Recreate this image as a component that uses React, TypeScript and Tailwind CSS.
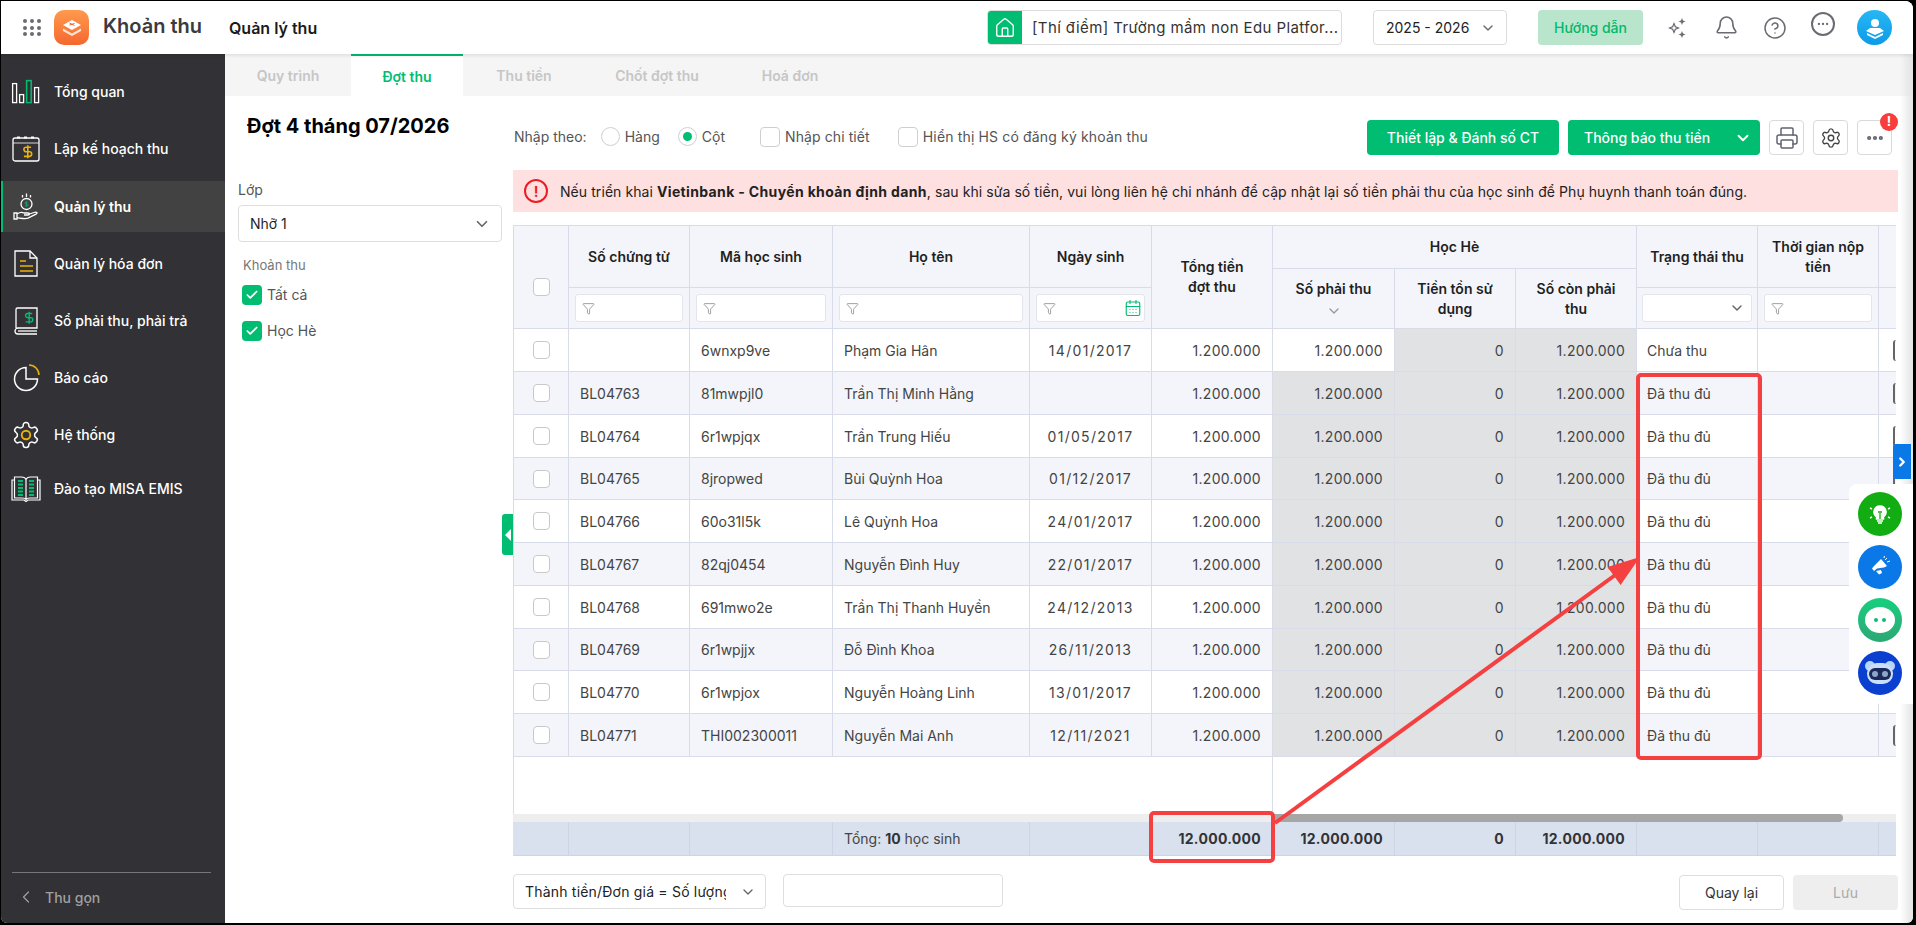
import { Bell, CalendarDays, Check, ChevronDown, ChevronLeft, ChevronRight, CircleHelp, Ellipsis, Filter, House, Printer, Settings } from "lucide-react";
import type { ReactNode } from "react";

const DOLLAR = "M12 2v20 M17 5H9.5a3.5 3.5 0 0 0 0 7h5a3.5 3.5 0 0 1 0 7H6";
const GEAR =
  "M12.22 2h-.44a2 2 0 0 0-2 2v.18a2 2 0 0 1-1 1.73l-.43.25a2 2 0 0 1-2 0l-.15-.08a2 2 0 0 0-2.73.73l-.22.38a2 2 0 0 0 .73 2.73l.15.1a2 2 0 0 1 1 1.72v.51a2 2 0 0 1-1 1.74l-.15.09a2 2 0 0 0-.73 2.73l.22.38a2 2 0 0 0 2.73.73l.15-.08a2 2 0 0 1 2 0l.43.25a2 2 0 0 1 1 1.73V20a2 2 0 0 0 2 2h.44a2 2 0 0 0 2-2v-.18a2 2 0 0 1 1-1.73l.43-.25a2 2 0 0 1 2 0l.15.08a2 2 0 0 0 2.73-.73l.22-.39a2 2 0 0 0-.73-2.73l-.15-.08a2 2 0 0 1-1-1.74v-.5a2 2 0 0 1 1-1.74l.15-.09a2 2 0 0 0 .73-2.73l-.22-.38a2 2 0 0 0-2.73-.73l-.15.08a2 2 0 0 1-2 0l-.43-.25a2 2 0 0 1-1-1.73V4a2 2 0 0 0-2-2z";

const NavSvg = ({ children }: { children: ReactNode }) => (
  <svg width="30" height="30" viewBox="0 0 30 30" fill="none" stroke="#fff" strokeWidth="1.3">
    {children}
  </svg>
);

const Dollar = ({ x, y, s, color }: { x: number; y: number; s: number; color: string }) => (
  <g transform={`translate(${x} ${y}) scale(${s})`}>
    <path d={DOLLAR} stroke={color} strokeWidth={2.4} fill="none" />
  </g>
);

const navItems: { label: string; icon: ReactNode; active?: boolean; cls: string }[] = [
  {
    label: "Tổng quan",
    cls: "mt-[12px]",
    icon: (
      <NavSvg>
        <rect x="1.6" y="6.6" width="4" height="19" />
        <rect x="8.6" y="17.6" width="4" height="8" />
        <rect x="15.6" y="3.6" width="4.6" height="22" stroke="#00bd71" strokeWidth="1.5" />
        <rect x="23.6" y="10.6" width="4" height="15" />
      </NavSvg>
    ),
  },
  {
    label: "Lập kế hoạch thu",
    cls: "mt-[6px]",
    icon: (
      <NavSvg>
        <rect x="2" y="4" width="26" height="23" rx="2" />
        <path d="M2 9h26" strokeWidth="0.8" />
        <path d="M6 3.5h3M13 3.5h3M20 3.5h3" strokeWidth="2" />
        <Dollar x={9} y={10} s={0.65} color="#eab308" />
      </NavSvg>
    ),
  },
  {
    label: "Quản lý thu",
    active: true,
    cls: "mt-[7px]",
    icon: (
      <NavSvg>
        <circle cx="15.5" cy="12" r="5.5" />
        <path d="M15.5 1.5v3.5M11.5 3v2.5M19.5 3v2.5" />
        <Dollar x={12.3} y={8.8} s={0.27} color="#00bd71" />
        <path d="M3 21h3v6H3zM6 22c3-2 5-2 7-1h4c2 0 2 2 0 2h-4M17 22.5l6-2c3-1 4 .5 2 1.7l-8 4c-3 1-7 0-11-.5" />
      </NavSvg>
    ),
  },
  {
    label: "Quản lý hóa đơn",
    cls: "mt-[6px]",
    icon: (
      <NavSvg>
        <path d="M4 2h15l7 7v18H4z" />
        <path d="M19 2v7h7" />
        <path d="M9 12h6M9 17h13M9 22h13" stroke="#eab308" strokeWidth="1.5" />
      </NavSvg>
    ),
  },
  {
    label: "Sổ phải thu, phải trả",
    cls: "mt-[6px]",
    icon: (
      <NavSvg>
        <path d="M5 22V3.5A1.5 1.5 0 0 1 6.5 2H26v20H7a2.5 2.5 0 0 0 0 6h19" />
        <path d="M7 25h19" />
        <Dollar x={11} y={4.5} s={0.6} color="#00bd71" />
      </NavSvg>
    ),
  },
  {
    label: "Báo cáo",
    cls: "mt-[6px]",
    icon: (
      <NavSvg>
        <path d="M15 4.5a11.5 11.5 0 1 0 11.5 11.5H15z" strokeWidth="1.5" />
        <path d="M18 2a10 10 0 0 1 10 10" stroke="#eab308" strokeWidth="1.5" />
      </NavSvg>
    ),
  },
  {
    label: "Hệ thống",
    cls: "mt-[6px]",
    icon: (
      <svg width="30" height="30" viewBox="0 0 24 24" fill="none" stroke="#fff" strokeWidth="1.2">
        <path d={GEAR} />
        <circle cx="12" cy="12" r="3.4" stroke="#eab308" strokeWidth="1.5" />
      </svg>
    ),
  },
  {
    label: "Đào tạo MISA EMIS",
    cls: "mt-[3px]",
    icon: (
      <NavSvg>
        <path d="M3.5 6H1v20h12l2 1.5 2-1.5h12V6h-2.5" strokeWidth="1.2" />
        <path d="M3.5 3h7c2 0 4 1 4.5 2.5C15.500 4 17.500 3 19.500 3h7v21h-8c-1.500 0-3 .5-3.500 1.500-.5-1-2-1.500-3.500-1.500h-8zM15 5.500v20" strokeWidth="1.2" />
        <path d="M7 7h5M7 10.500h5M7 14h5M7 17.500h5M7 21h5M18 7h5M18 10.500h5M18 14h5M18 17.500h5M18 21h5" stroke="#00bd71" strokeWidth="1.8" />
      </NavSvg>
    ),
  },
];

const rows = [
  { ct: "", ma: "6wnxp9ve", ten: "Phạm Gia Hân", ns: "14/01/2017", tt: "Chưa thu" },
  { ct: "BL04763", ma: "81mwpjl0", ten: "Trần Thị Minh Hằng", ns: "", tt: "Đã thu đủ" },
  { ct: "BL04764", ma: "6r1wpjqx", ten: "Trần Trung Hiếu", ns: "01/05/2017", tt: "Đã thu đủ" },
  { ct: "BL04765", ma: "8jropwed", ten: "Bùi Quỳnh Hoa", ns: "01/12/2017", tt: "Đã thu đủ" },
  { ct: "BL04766", ma: "60o31l5k", ten: "Lê Quỳnh Hoa", ns: "24/01/2017", tt: "Đã thu đủ" },
  { ct: "BL04767", ma: "82qj0454", ten: "Nguyễn Đình Huy", ns: "22/01/2017", tt: "Đã thu đủ" },
  { ct: "BL04768", ma: "691mwo2e", ten: "Trần Thị Thanh Huyền", ns: "24/12/2013", tt: "Đã thu đủ" },
  { ct: "BL04769", ma: "6r1wpjjx", ten: "Đỗ Đình Khoa", ns: "26/11/2013", tt: "Đã thu đủ" },
  { ct: "BL04770", ma: "6r1wpjox", ten: "Nguyễn Hoàng Linh", ns: "13/01/2017", tt: "Đã thu đủ" },
  { ct: "BL04771", ma: "THI002300011", ten: "Nguyễn Mai Anh", ns: "12/11/2021", tt: "Đã thu đủ" },
];

const colWidths = [56, 121, 143, 197, 122, 121, 122, 121, 121, 121, 121, 60];
const cell = "border-r border-b border-[#d8dce9] p-0";
const headCell = `${cell} bg-[#f3f5fa] text-[14px] font-semibold text-[#1f1f1f] leading-[20px] text-center align-middle`;
const money = "text-right pr-[11px] tracking-[0.3px]";
const footCell = "border-r border-b border-[#cdd5e5]";

const Box = () => <span className="block w-[17px] h-[18px] rounded-[4px] border border-[#c9c9c9] bg-white" />;

const FilterInput = ({ children }: { children?: ReactNode }) => (
  <div className="mx-[6px] h-[28px] rounded-[3px] border border-[#e3e5ee] bg-white flex items-center justify-between pl-[6px] pr-[2px]">
    <Filter size={13} color="#8a8a8a" strokeWidth={1.5} />
    {children}
  </div>
);

const GreenCheck = () => (
  <span className="flex w-[20px] h-[20px] rounded-[4px] bg-[#00bd71] items-center justify-center">
    <Check size={14} color="#fff" strokeWidth={3} />
  </span>
);

const IconBtn = ({ children }: { children: ReactNode }) => (
  <button className="flex w-[35px] h-[35px] items-center justify-center rounded-[4px] border border-[#d9d9d9] bg-white">
    {children}
  </button>
);

const Radio = ({ on }: { on?: boolean }) => (
  <span className="flex w-[19px] h-[19px] rounded-full border border-[#cfcfcf] items-center justify-center">
    {on && <span className="w-[9px] h-[9px] rounded-full bg-[#00bd71]" />}
  </span>
);

const Sparkle = () => (
  <svg width="26" height="26" viewBox="0 0 26 26" fill="#6b6b73">
    <path d="M9 7l1.800 4.200L15 13l-4.200 1.800L9 19l-1.800-4.200L3 13l4.200-1.800zM9 10l-.8 2.200L6 13l2.200.8L9 16l.8-2.200L12 13l-2.200-.8z" fillRule="evenodd" />
    <path d="M17 3l1 2.500 2.500 1-2.500 1L17 10l-1-2.500-2.500-1 2.500-1zM17 16l1 2.500 2.500 1-2.500 1L17 23l-1-2.500-2.500-1 2.500-1z" />
  </svg>
);

export default function App() {
  return (
    <div className="relative w-[1916px] h-[925px] bg-black pt-px pl-px pr-[3px] pb-[2px] font-[Inter,sans-serif] overflow-hidden">
      <div className="relative w-full h-full bg-white rounded-tr-[8px] rounded-bl-[6px] rounded-br-[6px] overflow-hidden flex flex-col">
        {/* top bar */}
        <header className="flex items-center h-[53px] shrink-0 bg-white shadow-[0_1px_4px_rgba(0,0,0,0.12)] z-10">
          <div className="ml-[22px] grid grid-cols-3 gap-[2.500px] w-[18px]">
            {Array.from({ length: 9 }).map((_, i) => (
              <span key={i} className="w-[4px] h-[4px] rounded-full bg-[#6b6b73]" />
            ))}
          </div>
          <div className="ml-[13px] flex w-[35px] h-[35px] rounded-[10px] bg-gradient-to-b from-[#ff9a4d] to-[#f4662f] items-center justify-center">
            <svg width="24" height="24" viewBox="0 0 24 24" fill="#fff">
              <path d="M12 4l9 5-9 5-9-5z" />
              <path d="M3 12.500l9 5 9-5v2.500l-9 5-9-5z" opacity="0.8" />
              <path d="M9.500 9l5-1.500M9.500 7l5 2.500" stroke="#f4662f" strokeWidth="1" />
            </svg>
          </div>
          <span className="ml-[14px] text-[20px] font-semibold text-[#3a3a3f] -mt-[4px] w-[126px] whitespace-nowrap">Khoản thu</span>
          <span className="text-[16px] font-semibold text-[#1a1a1a]">Quản lý thu</span>
          <div className="ml-auto flex items-center">
            <div className="flex w-[355px] h-[35px] rounded-[4px] border border-[#dcdcdc] overflow-hidden">
              <span className="flex w-[35px] -ml-px bg-[#00bd71] items-center justify-center shrink-0">
                <House size={22} color="#fff" strokeWidth={1.5} />
              </span>
              <span className="pl-[10px] text-[15px] tracking-[0.4px] leading-[33px] text-[#333] whitespace-nowrap">
                [Thí điểm] Trường mầm non Edu Platfor...
              </span>
            </div>
            <div className="ml-[31px] flex w-[134px] h-[35px] rounded-[4px] border border-[#dcdcdc] items-center justify-between pl-[12px] pr-[10px] text-[14px] text-[#222]">
              2025 - 2026
              <ChevronDown size={16} color="#666" />
            </div>
            <button className="ml-[31px] w-[105px] h-[35px] rounded-[4px] bg-[#b8e5cb] text-[14px] font-medium text-[#00b96b]">
              Hướng dẫn
            </button>
            <span className="ml-[22px] flex w-[26px] justify-center">
              <Sparkle />
            </span>
            <span className="ml-[23px]">
              <Bell size={25} color="#6b6b73" strokeWidth={1.500} />
            </span>
            <span className="ml-[24px]">
              <CircleHelp size={24} color="#6b6b73" strokeWidth={1.500} />
            </span>
            <span className="ml-[24px] flex w-[24px] h-[24px] -mt-[8px] rounded-full border-2 border-[#6b6b73] items-center justify-center">
              <Ellipsis size={14} color="#6b6b73" />
            </span>
            <span className="ml-[22px] mr-[21px] flex w-[35px] h-[35px] rounded-full bg-gradient-to-b from-[#27b7f5] to-[#0a9be8] items-center justify-center">
              <svg width="24" height="24" viewBox="0 0 24 24" fill="#fff">
                <circle cx="12" cy="7" r="4" />
                <path d="M7 12h10l4 3-9 4-9-4zM4 17l8 4 8-4v2l-8 4-8-4z" />
              </svg>
            </span>
          </div>
        </header>

        <div className="flex flex-1 min-h-0">
          {/* sidebar */}
          <aside className="flex flex-col w-[224px] shrink-0 bg-[#323135]">
            {navItems.map((it) => (
              <div
                key={it.label}
                className={`flex items-center h-[51px] shrink-0 pl-[10px] ${it.cls} ${
                  it.active ? "bg-[#424242] border-l-2 border-[#00bd71] font-semibold" : "font-medium"
                }`}
              >
                <span className={it.active ? "flex w-[30px] -ml-[2px]" : "flex w-[30px]"}>{it.icon}</span>
                <span className="ml-[13px] text-[14px] text-white">{it.label}</span>
              </div>
            ))}
            <div className="mt-auto ml-[11px] w-[199px] h-[51px] border-t border-[#77767b] flex items-center pl-[4px] pb-[2px] text-[#a0a0a0]">
              <ChevronLeft size={20} strokeWidth={1.5} />
              <span className="ml-[9px] text-[14px] font-medium">Thu gọn</span>
            </div>
          </aside>

          <main className="flex-1 min-w-0 flex flex-col">
            {/* tabs */}
            <nav className="flex h-[42px] shrink-0 bg-[#f5f5f5] text-[14px] font-semibold text-[#c6c6c6]">
              <span className="w-[126px] flex items-center justify-center">Quy trình</span>
              <span className="w-[112px] flex items-center justify-center bg-white border-t-2 border-[#00bd71] text-[#00bd71]">
                Đợt thu
              </span>
              <span className="w-[122px] flex items-center justify-center">Thu tiền</span>
              <span className="w-[144px] flex items-center justify-center">Chốt đợt thu</span>
              <span className="w-[122px] flex items-center justify-center">Hoá đơn</span>
            </nav>

            <div className="relative flex flex-1 min-h-0">
              {/* left filter */}
              <section className="relative w-[288px] shrink-0 pl-[13px] pr-[11px]">
                <h1 className="pl-[9px] pt-[16px] text-[20px] leading-[28px] font-bold text-black">Đợt 4 tháng 07/2026</h1>
                <p className="mt-[40px] text-[14px] leading-[20px] text-[#555]">Lớp</p>
                <div className="mt-[5px] flex h-[37px] items-center justify-between rounded-[4px] border border-[#dedede] pl-[11px] pr-[10px] text-[14px] text-[#1f1f1f]">
                  Nhỡ 1
                  <ChevronDown size={18} color="#666" strokeWidth={2.200} />
                </div>
                <p className="mt-[13px] pl-[5px] text-[13px] leading-[20px] text-[#777]">Khoản thu</p>
                <label className="mt-[9px] ml-[4px] flex items-center gap-[5px] text-[14px] text-[#555]">
                  <GreenCheck />
                  Tất cả
                </label>
                <label className="mt-[15px] ml-[4px] flex items-center gap-[5px] text-[14px] text-[#555]">
                  <GreenCheck />
                  Học Hè
                </label>
                <span className="absolute right-0 top-[418px] flex w-[11px] h-[41px] rounded-l-[3px] bg-[#00bd71] items-center justify-center">
                  <span className="w-0 h-0 border-y-[6px] border-y-transparent border-r-[6px] border-r-white" />
                </span>
              </section>

              {/* table side */}
              <section className="flex-1 min-w-0 flex flex-col pr-[15px]">
                <div className="flex h-[74px] shrink-0 items-start justify-between pt-[24px] pl-px pr-[6px]">
                  <div className="flex items-center h-[35px] mt-[-1px] text-[14px] text-[#555]">
                    Nhập theo:
                    <span className="ml-[14px]"><Radio /></span>
                    <span className="ml-[5px]">Hàng</span>
                    <span className="ml-[18px]"><Radio on /></span>
                    <span className="ml-[5px]">Cột</span>
                    <span className="ml-[35px] w-[20px] h-[20px] rounded-[4px] border border-[#cfcfcf]" />
                    <span className="ml-[5px] tracking-[0.1px]">Nhập chi tiết</span>
                    <span className="ml-[28px] w-[20px] h-[20px] rounded-[4px] border border-[#cfcfcf]" />
                    <span className="ml-[5px] tracking-[0.15px]">Hiển thị HS có đăng ký khoản thu</span>
                  </div>
                  <div className="flex items-center">
                    <button className="w-[192px] h-[35px] rounded-[4px] bg-[#00bd71] text-[14px] font-medium text-white">
                      Thiết lập &amp; Đánh số CT
                    </button>
                    <button className="ml-[9px] flex w-[192px] h-[35px] items-center justify-between rounded-[4px] bg-[#00bd71] pl-[16px] pr-[8px] text-[14px] font-medium text-white">
                      Thông báo thu tiền
                      <ChevronDown size={18} strokeWidth={2.500} />
                    </button>
                    <span className="ml-[9px]">
                      <IconBtn>
                        <Printer size={24} color="#5f6372" strokeWidth={1.500} />
                      </IconBtn>
                    </span>
                    <span className="ml-[9px]">
                      <IconBtn>
                        <Settings size={22} color="#444" strokeWidth={1.500} />
                      </IconBtn>
                    </span>
                    <span className="relative ml-[9px]">
                      <IconBtn>
                        <Ellipsis size={20} color="#5f6372" strokeWidth={3} />
                      </IconBtn>
                      <span className="absolute -top-[7px] -right-[6px] flex w-[18px] h-[18px] rounded-full bg-[#f73d3d] items-center justify-center text-[13px] font-bold text-white">
                        !
                      </span>
                    </span>
                  </div>
                </div>

                <div className="flex h-[42px] shrink-0 items-center bg-[#ffe0e0] pl-[11px] text-[14px] text-[#222]">
                  <span className="flex w-[24px] h-[24px] rounded-full border-2 border-[#ee1c25] items-center justify-center text-[14px] font-bold text-[#ee1c25]">
                    !
                  </span>
                  <span className="ml-[12px] whitespace-nowrap tracking-[0.07px]">
                    Nếu triển khai <b className="font-bold tracking-[0.35px]">Vietinbank - Chuyển khoản định danh</b>, sau khi sửa số tiền, vui lòng liên hệ chi nhánh để cập nhật lại số tiền phải thu của học sinh để Phụ huynh thanh toán đúng.
                  </span>
                </div>

                <div className="mt-[13px] w-[1383px] overflow-hidden">
                  <table className="table-fixed border-separate border-spacing-0 w-[1426px] text-[14px] text-[#444]">
                    <colgroup>
                      {colWidths.map((w, i) => (
                        <col key={i} style={{ width: w }} />
                      ))}
                    </colgroup>
                    <thead>
                      <tr className="h-[44px]">
                        <th rowSpan={3} className={`${headCell} border-l border-t`}>
                          <span className="flex justify-center pt-[19px]"><Box /></span>
                        </th>
                        <th rowSpan={2} className={`${headCell} border-t`}>Số chứng từ</th>
                        <th rowSpan={2} className={`${headCell} border-t`}>Mã học sinh</th>
                        <th rowSpan={2} className={`${headCell} border-t`}>Họ tên</th>
                        <th rowSpan={2} className={`${headCell} border-t`}>Ngày sinh</th>
                        <th rowSpan={3} className={`${headCell} border-t`}>
                          Tổng tiền
                          <br />
                          đợt thu
                        </th>
                        <th colSpan={3} className={`${headCell} border-t`}>Học Hè</th>
                        <th rowSpan={2} className={`${headCell} border-t`}>Trạng thái thu</th>
                        <th rowSpan={2} className={`${headCell} border-t`}>
                          Thời gian nộp
                          <br />
                          tiền
                        </th>
                        <th rowSpan={2} className={`${headCell} border-t`} />
                      </tr>
                      <tr className="h-[19px]">
                        <th rowSpan={2} className={headCell}>
                          Số phải thu
                          <ChevronDown size={16} color="#999" className="mx-auto mt-[4px]" />
                        </th>
                        <th rowSpan={2} className={headCell}>
                          Tiền tồn sử
                          <br />
                          dụng
                        </th>
                        <th rowSpan={2} className={headCell}>
                          Số còn phải
                          <br />
                          thu
                        </th>
                      </tr>
                      <tr className="h-[41px]">
                        <th className={headCell}><FilterInput /></th>
                        <th className={headCell}><FilterInput /></th>
                        <th className={headCell}><FilterInput /></th>
                        <th className={headCell}>
                          <FilterInput>
                            <CalendarDays size={18} color="#00bd71" strokeWidth={1.500} />
                          </FilterInput>
                        </th>
                        <th className={headCell}>
                          <div className="mx-[5px] h-[28px] rounded-[3px] border border-[#e3e5ee] bg-white flex items-center justify-end pr-[6px]">
                            <ChevronDown size={16} color="#666" strokeWidth={2.200} />
                          </div>
                        </th>
                        <th className={headCell}><FilterInput /></th>
                        <th className={headCell} />
                      </tr>
                    </thead>
                    <tbody>
                      {rows.map((r, i) => {
                        const bg = i % 2 ? "bg-[#f3f5fa]" : "bg-white";
                        const locked = "bg-[#e1e2e4]";
                        return (
                          <tr key={i} className={i === 3 || i === 7 ? "h-[42px]" : "h-[43px]"}>
                            <td className={`${cell} ${bg} border-l`}>
                              <span className="flex justify-center"><Box /></span>
                            </td>
                            <td className={`${cell} ${bg} pl-[11px]`}>{r.ct}</td>
                            <td className={`${cell} ${bg} pl-[11px]`}>{r.ma}</td>
                            <td className={`${cell} ${bg} pl-[11px]`}>{r.ten}</td>
                            <td className={`${cell} ${bg} text-center tracking-[1.3px]`}>{r.ns}</td>
                            <td className={`${cell} ${bg} ${money}`}>1.200.000</td>
                            <td className={`${cell} ${i === 0 ? "bg-white" : locked} ${money}`}>1.200.000</td>
                            <td className={`${cell} ${locked} ${money}`}>0</td>
                            <td className={`${cell} ${locked} ${money}`}>1.200.000</td>
                            <td className={`${cell} ${bg} pl-[10px]`}>{r.tt}</td>
                            <td className={`${cell} ${bg}`} />
                            <td className={`${cell} ${bg} pl-[14px]`}>
                              <span className="block w-[20px] h-[21px] rounded-l-[3px] border-l-2 border-[#666]" />
                            </td>
                          </tr>
                        );
                      })}
                      <tr className="h-[57px]">
                        <td colSpan={6} className="border-l border-r border-[#d8dce9]" />
                        <td colSpan={6} />
                      </tr>
                      <tr className="h-[8px]">
                        <td colSpan={12} className="p-0 bg-[#eeeeee]">
                          <div className="ml-[759px] w-[571px] h-[8px] rounded-full bg-[#a6a6a6]" />
                        </td>
                      </tr>
                      <tr className="h-[34px] bg-[#d9e0ee]">
                        <td className={footCell} />
                        <td className={footCell} />
                        <td className={footCell} />
                        <td className={`${footCell} pl-[11px]`}>
                          Tổng: <b className="font-bold text-[#333]">10</b> học sinh
                        </td>
                        <td className={footCell} />
                        <td className={`${footCell} ${money} font-bold text-[#333]`}>12.000.000</td>
                        <td className={`${footCell} ${money} font-bold text-[#333]`}>12.000.000</td>
                        <td className={`${footCell} ${money} font-bold text-[#333]`}>0</td>
                        <td className={`${footCell} ${money} font-bold text-[#333]`}>12.000.000</td>
                        <td className={footCell} />
                        <td className={footCell} />
                        <td className="border-b border-[#cdd5e5]" />
                      </tr>
                    </tbody>
                  </table>
                </div>

                <div className="mt-[18px] flex items-start">
                  <div className="flex w-[253px] h-[35px] items-center rounded-[4px] border border-[#dedede] pl-[11px] pr-[9px] text-[14px] text-[#222]">
                    <span className="w-[201px] overflow-hidden whitespace-nowrap tracking-[0.2px]">Thành tiền/Đơn giá = Số lượng</span>
                    <ChevronDown size={16} color="#666" className="ml-auto" />
                  </div>
                  <div className="ml-[17px] w-[220px] h-[33px] rounded-[4px] border border-[#dedede]" />
                  <button className="ml-auto mt-px w-[105px] h-[35px] rounded-[4px] border border-[#dedede] text-[14px] text-[#333]">
                    Quay lại
                  </button>
                  <button className="ml-[9px] mt-px w-[105px] h-[35px] rounded-[4px] bg-[#eeeeee] text-[14px] text-[#aaa]">
                    Lưu
                  </button>
                </div>
              </section>
            </div>
          </main>
        </div>

        <span className="absolute top-0 right-0 bottom-0 w-[13px] bg-gradient-to-r from-transparent to-[#e3e3e3] pointer-events-none" />
      </div>

      {/* blue tab + quick actions */}
      <span className="absolute left-[1893px] top-[444px] flex w-[18px] h-[35px] rounded-l-[3px] bg-[#0a78e6] items-center justify-center">
        <ChevronRight size={14} color="#fff" strokeWidth={4} />
      </span>
      <div className="absolute left-[1849px] top-[484px] w-[64px] h-[220px] rounded-l-[8px] bg-white flex flex-col items-start pl-[9px] pt-[8px] gap-[9px]">
        <span className="flex w-[44px] h-[44px] rounded-full bg-[#12ad12] items-center justify-center">
          <svg width="30" height="30" viewBox="0 0 30 30" fill="none" stroke="#fff" strokeWidth="1.500">
            <path d="M15 7a6 6 0 0 0-3.500 10.900V20h7v-2.100A6 6 0 0 0 15 7z" fill="#fff" />
            <path d="M15 20v-6M13 13h4" stroke="#12ad12" strokeWidth="1.300" />
            <path d="M12 22h6M13 24h4M5 9l2 1M25 9l-2 1M5 19l2-1M25 19l-2-1" />
          </svg>
        </span>
        <span className="flex w-[44px] h-[44px] rounded-full bg-[#0a78e6] items-center justify-center">
          <svg width="28" height="28" viewBox="0 0 28 28" fill="#fff">
            <path d="M15 6l6 7-3 1.500-7 1-3 2.500-2-2.500 2.500-3z" />
            <path d="M10 18l5-1 1 3-3 1.500z" />
            <path d="M19 7l2-2M21 9l3-1M18 5l.5-2" stroke="#fff" strokeWidth="1" />
          </svg>
        </span>
        <span className="flex w-[44px] h-[44px] rounded-full bg-gradient-to-b from-[#14cf7d] to-[#2aa875] items-center justify-center">
          <span className="flex w-[30px] h-[26px] rounded-[50%] bg-white items-center justify-center gap-[4px]">
            <span className="w-[4px] h-[4px] rounded-full bg-[#14b878]" />
            <span className="w-[4px] h-[4px] rounded-full bg-[#14b878]" />
          </span>
        </span>
        <span className="flex w-[44px] h-[44px] rounded-full bg-[#0a3fd0] items-center justify-center">
          <svg width="36" height="30" viewBox="0 0 36 30">
            <circle cx="8" cy="8" r="5" fill="#b7d5f8" />
            <circle cx="28" cy="8" r="5" fill="#b7d5f8" />
            <rect x="5" y="5" width="26" height="21" rx="10" fill="#c9def9" />
            <rect x="7" y="10" width="22" height="12" rx="6" fill="#1c2a5a" />
            <circle cx="13" cy="16" r="3" fill="#8fa6c9" />
            <circle cx="23" cy="16" r="3" fill="#8fa6c9" />
          </svg>
        </span>
      </div>

      {/* red annotations */}
      <div className="absolute left-[1636px] top-[373px] w-[126px] h-[387px] rounded-[5px] border-[4px] border-[#f44040] pointer-events-none" />
      <div className="absolute left-[1149px] top-[811px] w-[126px] h-[52px] rounded-[5px] border-[4px] border-[#f44040] pointer-events-none" />
      <svg className="absolute left-0 top-0 pointer-events-none" width="1916" height="925" fill="none">
        <path d="M1275 823L1618 573" stroke="#f44040" strokeWidth="4" />
        <polygon points="1640,557 1620.600,585 1607.500,567" fill="#f44040" />
      </svg>
    </div>
  );
}
